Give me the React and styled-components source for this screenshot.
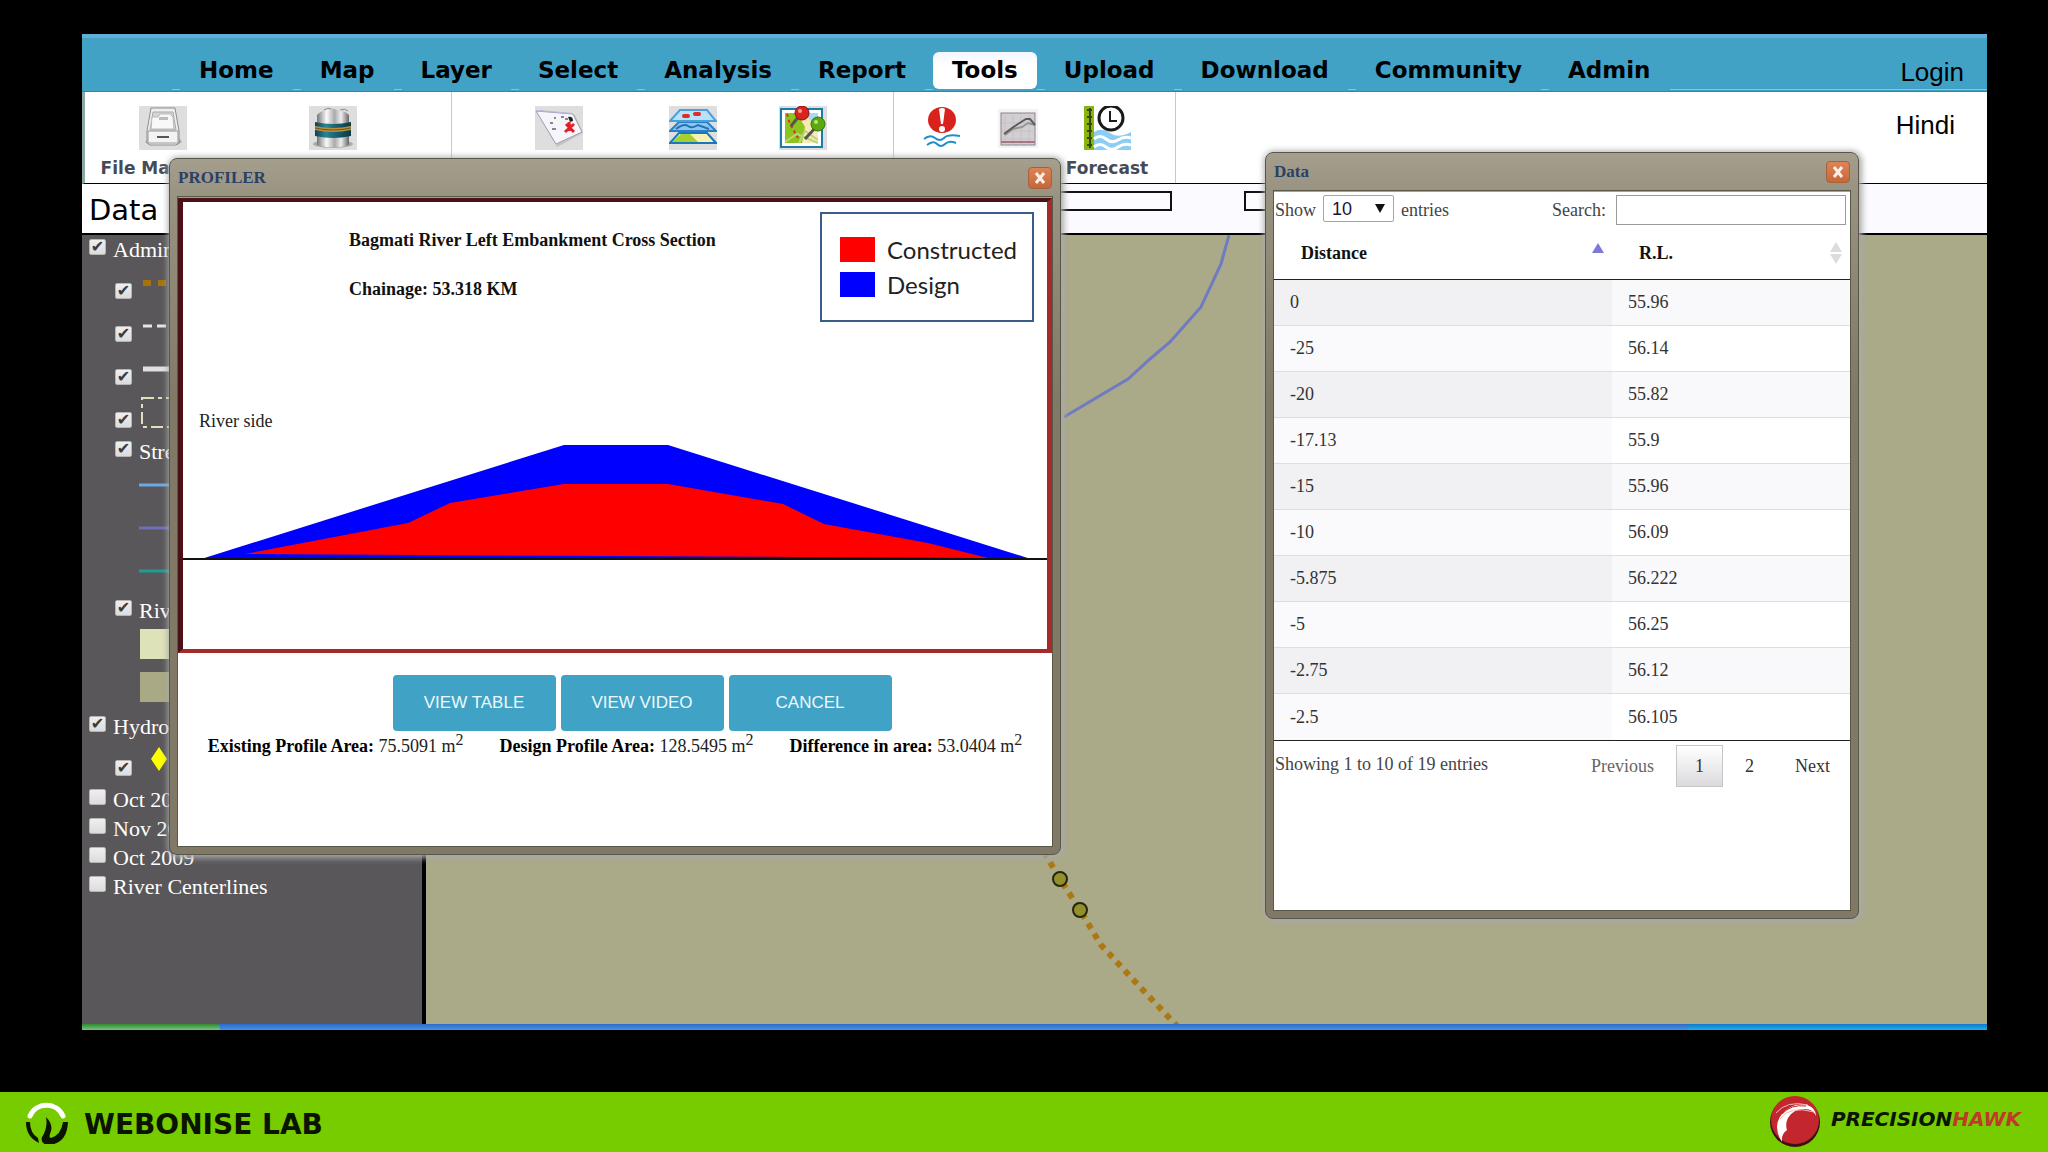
import React from 'react';
import styled, { createGlobalStyle, css } from 'styled-components';

const serif = '"Liberation Serif", "Times New Roman", serif';
const sans = '"Liberation Sans", Arial, sans-serif';
const wide = '"DejaVu Sans", Verdana, sans-serif';

const GlobalStyle = createGlobalStyle`
  *, *::before, *::after {
    box-sizing: border-box;
  }
  body {
    margin: 0;
    background: #000;
    font-family: ${serif};
  }
  svg {
    display: block;
  }
`;

const Page = styled.div`
  min-height: 100vh;
  display: flex;
  flex-direction: column;
`;

const Screen = styled.main`
  position: relative;
  flex: 1;
  margin: 34px 61px 62px 82px;
  display: flex;
  flex-direction: column;
  overflow: hidden;
  background: #fff;
`;

/* menu bar */

const NavBar = styled.nav`
  height: 58px;
  padding-left: 90px;
  display: flex;
  background: #42a2c6;
  border-top: 4px solid #63aed6;
  border-bottom: 1px solid #75715f;
`;

const Tabs = styled.ul`
  flex: 1;
  height: 52px;
  margin: 0;
  padding: 14px 0 0 8px;
  list-style: none;
  display: flex;
  gap: 8px;
  border-bottom: 1px solid #83c3e6;
`;

const Tab = styled.li`
  height: 38px;
  background: #42a2c6;
`;

const TabLink = styled.a`
  display: block;
  height: 37px;
  padding: 0 19px;
  font: bold 23px/36px ${wide};
  color: #000;
  text-decoration: none;
  border-radius: 6px;
  ${props => props.$active && css`
    background: linear-gradient(#f3f6ff, #fff 40%);
  `}
`;

const LoginItem = styled.li`
  margin-left: auto;
  padding-right: 23px;
`;

const PlainLink = styled.a`
  font: 26px/40px ${sans};
  color: #000;
  text-decoration: none;
`;

/* ribbon */

const Ribbon = styled.div`
  height: 92px;
  display: flex;
  border-left: 3px solid #8aa9a6;
  border-bottom: 1px solid #000;
`;

const Group = styled.div`
  width: ${props => props.$width}px;
  padding-left: ${props => props.$indent}px;
  display: flex;
  gap: ${props => props.$gap || 0}px;
  border-right: 1px solid #c8c8cc;
`;

const Tool = styled.button`
  width: ${props => props.$width}px;
  padding: 14px 0 0;
  display: flex;
  flex-direction: column;
  align-items: center;
  gap: 8px;
  border: 0;
  background: none;
  font: bold 17px/20px ${wide};
  color: #464a54;
  white-space: nowrap;
`;

const Language = styled.div`
  margin-left: auto;
  padding: 13px 32px 0 0;
`;

/* header row above the panels */

const SubBar = styled.div`
  height: 51px;
  display: flex;
  background: #fbfafe;
  border-bottom: 2px solid #000;
`;

const PanelTitle = styled.h1`
  width: 344px;
  margin: 0;
  padding-left: 7px;
  background: #fff;
  font: 29px/53px ${wide};
  color: #000;
`;

const SubBarFields = styled.div`
  flex: 1;
  padding: 7px 0 0 586px;
  display: flex;
  gap: 72px;
`;

const Field = styled.input`
  width: 160px;
  height: 20px;
  border: 2px solid #111;
  background: #fcfbff;
`;

/* layer tree */

const Workspace = styled.div`
  flex: 1;
  display: flex;
`;

const Sidebar = styled.aside`
  width: 344px;
  background: #595759;
  border-right: 4px solid #000;
`;

const Layer = styled.label`
  height: ${props => (props.$tall ? 43 : 30)}px;
  padding-left: ${props => (props.$nested ? 33 : 7)}px;
  display: flex;
  align-items: flex-start;
  gap: 7px;
  font: 22px/29px ${serif};
  color: #fff;
  white-space: nowrap;
`;

const ImageryLayer = styled(Layer)`
  height: 29px;
`;

const Tick = styled.input`
  appearance: none;
  width: 17px;
  height: 16px;
  margin: ${props => (props.$tall ? 18 : 4)}px 0 0;
  display: grid;
  place-items: center;
  border: 1px solid #b5b5b5;
  border-radius: 2px;
  background: linear-gradient(#efefef, #dcdcdc);

  &:checked::before {
    content: '✔';
    font: 16px/14px ${wide};
    color: #3c3c3c;
  }
`;

const LegendRow = styled.div`
  height: 43px;
  padding-left: 57px;
`;

/* map */

const Map = styled.div`
  flex: 1;
  background: #aaa988;
`;

const TaskBar = styled.div`
  height: 6px;
  display: flex;
  background: linear-gradient(#2a6cc8, #4a90ea);
`;

const StartEdge = styled.div`
  width: 138px;
  border-radius: 0 4px 0 0;
  background: linear-gradient(#2f8a35, #7cc47c);
`;

const TrayEdge = styled.div`
  width: 299px;
  margin-left: auto;
  background: linear-gradient(#1479c8, #19b0f4);
`;

/* floating windows */

const Window = styled.section`
  position: absolute;
  left: ${props => props.$left}px;
  top: ${props => props.$top}px;
  width: ${props => props.$width}px;
  height: ${props => props.$height}px;
  padding: 0 8px 8px;
  display: flex;
  flex-direction: column;
  border: 1px solid #58564a;
  border-radius: 8px;
  background: linear-gradient(#a59e8c, #989280 40px, #7f7965 240px);
  box-shadow: 1px 1px 6px 2px #a9a9a9;
`;

const TitleBar = styled.header`
  height: 38px;
  display: flex;
  align-items: center;
  justify-content: space-between;
`;

const Title = styled.h2`
  margin: 0;
  font: bold 17px/20px ${serif};
  color: #2b4066;
`;

const Close = styled.button`
  width: 24px;
  height: 22px;
  padding: 0;
  display: grid;
  place-items: center;
  border: 1px solid #a9603c;
  border-radius: 4px;
  background: linear-gradient(#dc8455, #c4683a);
`;

const WindowBody = styled.div`
  flex: 1;
  background: #fff;
  border-top: 1px solid #97a3b4;
  box-shadow: 0 0 0 1px #5b5747;
`;

const Frame = styled.div`
  border: solid;
  border-width: 4px 5px;
  border-color: #4a1216 #a52a2a #a52a2a #4a1216;
`;

const FrameHead = styled.div`
  height: 207px;
  padding: 10px 13px 0 166px;
  display: flex;
  justify-content: space-between;
`;

const Captions = styled.div`
  padding-top: 16px;
  display: flex;
  flex-direction: column;
  gap: 25px;
  font: bold 18px/24px ${serif};
  color: #111;
`;

const Legend = styled.div`
  width: 214px;
  height: 110px;
  padding: 23px 0 0 18px;
  display: flex;
  flex-direction: column;
  gap: 10px;
  border: 2px solid #385d8a;
`;

const LegendItem = styled.div`
  display: flex;
  align-items: center;
  gap: 12px;
  font: 24px/25px Lato, Carlito, sans-serif;
  color: #222;

  &::before {
    content: '';
    width: 35px;
    height: 25px;
    background: ${props => props.$color};
  }
`;

const SideNote = styled.div`
  height: 31px;
  padding-left: 16px;
  font: 18px/24px ${serif};
  color: #222;
`;

const Actions = styled.div`
  padding: 22px 0 0 54px;
  display: flex;
  justify-content: center;
  gap: 5px;
`;

const Action = styled.button`
  width: 163px;
  height: 56px;
  border: 0;
  border-radius: 4px;
  background: #40a3c6;
  font: 17px/20px ${sans};
  color: #eef8fc;
`;

const Stats = styled.div`
  display: flex;
  justify-content: center;
  gap: 36px;
  font: 18px/30px ${serif};
  color: #222;
  white-space: nowrap;

  b {
    color: #000;
  }
  sup {
    font-size: 16px;
    line-height: 0;
  }
`;

/* data table */

const Controls = styled.div`
  height: 38px;
  padding: 3px 4px 0 1px;
  display: flex;
  justify-content: space-between;
  font: 18px/30px ${serif};
  color: #444;
`;

const ControlLabel = styled.label`
  display: flex;
  gap: ${props => props.$gap}px;
`;

const SelectBox = styled.span`
  position: relative;
  height: 27px;

  svg {
    position: absolute;
    right: 9px;
    top: 9px;
    pointer-events: none;
  }
`;

const Select = styled.select`
  appearance: none;
  display: block;
  width: 71px;
  height: 27px;
  padding: 0 8px;
  border: 1px solid #a6a6a6;
  border-radius: 2px;
  background: #fff;
  font: 18px/24px ${sans};
  color: #21123c;
`;

const Search = styled.input`
  width: 230px;
  height: 30px;
  border: 1px solid #9a9a9a;
  background: #fff;
`;

const Table = styled.table`
  width: 100%;
  table-layout: fixed;
  border-collapse: separate;
  border-spacing: 0;
  border-bottom: 1px solid #222;
  font: 18px/24px ${serif};
  color: #333;
`;

const HeadCell = styled.th`
  width: ${props => props.$width};
  height: 50px;
  padding: 0 8px 4px 27px;
  border-bottom: 1px solid #222;
  color: #111;
  text-align: left;
`;

const HeadLabel = styled.span`
  display: flex;
  justify-content: space-between;
  align-items: center;
`;

const Cell = styled.td`
  height: 46px;
  padding: 0 0 1px 16px;
  border-bottom: 1px solid #dedee0;
`;

const Row = styled.tr`
  ${Cell}:first-child {
    background: #fafafc;
  }
  &:nth-child(odd) ${Cell} {
    background: #f9f8fa;
  }
  &:nth-child(odd) ${Cell}:first-child {
    background: #f1f0f3;
  }
  &:last-child ${Cell} {
    border-bottom: 0;
  }
`;

const TableFoot = styled.div`
  padding: 4px 1px 0;
  display: flex;
  justify-content: space-between;
  font: 18px/38px ${serif};
  color: #444;
`;

const Pager = styled.div`
  display: flex;
  gap: 3px;
`;

const PageButton = styled.button`
  height: 42px;
  padding: 0 18px;
  border: 1px solid ${props => (props.$current ? '#c6c6c8' : 'transparent')};
  background: ${props => (props.$current ? 'linear-gradient(#fff, #dbdadd)' : 'none')};
  font: 18px/24px ${serif};
  color: ${props => (props.disabled ? '#666' : '#333')};
`;

/* sponsor strip */

const Footer = styled.footer`
  height: 60px;
  padding: 0 27px 0 25px;
  display: flex;
  align-items: center;
  justify-content: space-between;
  background: #77cc00;
`;

const Brand = styled.div`
  display: flex;
  align-items: center;
  gap: ${props => props.$gap}px;
`;

const LabName = styled.span`
  padding-top: 5px;
  font: bold 28px/44px ${wide};
  color: #0a1400;
`;

const HawkName = styled.span`
  padding-bottom: 6px;
  font: italic bold 20px/44px ${wide};
  color: #0a1400;

  em {
    color: #c0392b;
  }
`;

const tiles = {
  file: (
    <>
      <rect width="48" height="44" fill="#dedede" />
      <path d="M9 33 6 36l5 3h27l5-3-3-4z" fill="#a9a9a9" />
      <path d="M12 2h24l4 23v12l-3 2H11l-3-2V25z" fill="#efefef" stroke="#8c8c8c" />
      <path d="M14 6h20l3 18H11z" fill="#d4d4d4" stroke="#aaa" />
      <path d="M13 11h6l2-3h10l3 3 1 12H12z" fill="#f8f8f8" stroke="#bbb" />
      <rect x="20" y="11" width="9" height="3" fill="#bbb" />
      <path d="M9 25h30v12H9z" fill="#f3f3f3" stroke="#999" />
      <path d="M18 30h12v2H18z" fill="#555" />
    </>
  ),
  database: (
    <>
      <defs>
        <linearGradient id="steel">
          <stop offset="0" stopColor="#777" />
          <stop offset=".3" stopColor="#fafafa" />
          <stop offset=".55" stopColor="#aaa" />
          <stop offset=".75" stopColor="#eee" />
          <stop offset="1" stopColor="#666" />
        </linearGradient>
        <linearGradient id="teal">
          <stop offset="0" stopColor="#0d4250" />
          <stop offset=".3" stopColor="#2b8596" />
          <stop offset=".6" stopColor="#175f70" />
          <stop offset="1" stopColor="#0b3a47" />
        </linearGradient>
      </defs>
      <rect width="48" height="44" fill="#dedede" />
      <ellipse cx="24" cy="38" rx="20" ry="4" fill="#aaa" />
      <path d="M8 9q5-5 11-5l4-2 5 2q7 0 12 5v30q-16 5-32 0z" fill="url(#steel)" />
      <path d="M15 4q4-3 7-1M31 4q5-2 8 1" fill="none" stroke="#888" />
      <path d="M6 16q18 4 36 0v14q-18 4-36 0z" fill="url(#teal)" />
      <path d="M6 20q18 4 36 0v4q-18 4-36 0z" fill="#b9903a" />
      <path d="M6 22q18 4 36 0" fill="none" stroke="#6e5520" />
    </>
  ),
  select: (
    <>
      <rect width="48" height="44" fill="#dedede" />
      <path d="M3 8 40 9l8 18-26 14z" fill="#aaa" opacity=".5" />
      <path d="M1 5 38 8l9 18-26 12z" fill="#f5f5fb" stroke="#a0a0b0" />
      <path d="M1 5l3-1 34 3v1z" fill="#b9b6dc" />
      <path d="M15 17h3M19 12h2M26 11h3M17 23h4M30 13h3" stroke="#888" strokeWidth="2" />
      <path d="M33 11q5-1 5 4l-3 1z" fill="#222" />
      <path d="m31 18 8 8m0-8-9 8m4-10 1 9" stroke="#e3202a" strokeWidth="3" />
    </>
  ),
  layers: (
    <>
      <rect width="48" height="44" fill="#dedede" />
      <path d="M10 27h28l9 10H1z" fill="#f8f2b0" stroke="#1877c0" strokeWidth="2" />
      <path d="M12 28h9l8 8H3z" fill="#a3d02c" />
      <path d="M10 16h28l9 9H1z" fill="#8cc5f2" stroke="#2a7fc4" strokeWidth="2" />
      <path d="M7 23q8-6 12-3t10-1l11 4" fill="none" stroke="#2372b4" strokeWidth="2" />
      <path d="M11 4h27l9 11H1z" fill="#b6e2fa" stroke="#4a9fdc" strokeWidth="2" />
      <rect x="13" y="8" width="8" height="4" rx="2" fill="#e02a22" />
      <rect x="24" y="6" width="8" height="4" rx="2" fill="#e02a22" />
    </>
  ),
  pins: (
    <>
      <rect width="48" height="44" fill="#dedede" />
      <rect x="2" y="3" width="41" height="38" fill="#fff" stroke="#1c7ba8" strokeWidth="2" />
      <path d="M6 7h33v30H6z" fill="#f9e9b6" />
      <path d="M6 7h12l8 14-3 16H6z" fill="#8dc51e" />
      <path d="M26 7h13v11q-9-2-13-11z" fill="#a4dcf6" />
      <path d="M6 36 18 28l21 9M20 37l6-12 13 9" fill="none" stroke="#b9d67e" strokeWidth="2" />
      <path d="M8 8l3 10 8 14" fill="none" stroke="#d3371c" strokeWidth="2" strokeDasharray="3 3" />
      <path d="M21 9 12 20M37 21 26 33" stroke="#555" strokeWidth="3" />
      <circle cx="23" cy="7" r="7" fill="#d8261c" stroke="#8b0f0a" />
      <circle cx="39" cy="18" r="7" fill="#5ca80f" stroke="#33700a" />
      <circle cx="21" cy="5" r="2" fill="#f6a49c" />
      <circle cx="37" cy="16" r="2" fill="#b7e47c" />
    </>
  ),
  alert: (
    <>
      <ellipse cx="24" cy="14" rx="14" ry="13" fill="#d9221c" />
      <path d="M21 3q3-2 6 0l-2 15h-2z" fill="#fff" />
      <circle cx="24" cy="23" r="3" fill="#fff" />
      <path d="M6 33q6-5 11-1t9 0 16-2M9 39q6-5 10-1t8 0 11-1" fill="none" stroke="#1f8fc8" strokeWidth="2" />
    </>
  ),
  chart: (
    <>
      <rect x="4" y="3" width="40" height="39" fill="#f3f2f4" />
      <rect x="7" y="7" width="34" height="32" fill="#d2ced2" stroke="#8a858a" />
      <path d="M11 9v30M19 9v30M27 9v30M35 9v30M8 17h33M8 25h33M8 33h33" stroke="#c4c0c4" />
      <path d="M7 36h34" stroke="#a87680" strokeWidth="2" />
      <path d="M11 29l8-6 9-2 6-4 7 2" fill="none" stroke="#8f9a90" strokeWidth="2" />
      <path d="M10 28l8-6 6-4 8-5h4l5 6" fill="none" stroke="#5c5a60" strokeWidth="2" />
    </>
  ),
  forecast: (
    <>
      <rect x="1" width="10" height="44" fill="#8bb410" />
      <path d="M7 2v40M4 4h5M4 11h5M4 18h5M4 25h5M4 32h5M4 39h5" stroke="#34480a" strokeWidth="2" />
      <path d="M11 26q8-5 16 1t21-1v18H11z" fill="#8ccdf4" />
      <path
        d="M11 33q6-5 12 0t12 1q6-4 13-2M11 41q6-5 12 0t12 0q6-4 13-2"
        fill="none"
        stroke="#fff"
        strokeWidth="3"
      />
      <circle cx="28" cy="12" r="12" fill="#fff" stroke="#1a1a1a" strokeWidth="3" />
      <path d="M27 5v10h7" fill="none" stroke="#1a1a1a" strokeWidth="2" />
    </>
  ),
};

const ToolItem = ({ icon, width, label, name }) => (
  <Tool type="button" $width={width} aria-label={label || name}>
    <svg width="48" height="44" viewBox="0 0 48 44" aria-hidden="true">
      {tiles[icon]}
    </svg>
    {label}
  </Tool>
);

const Symbol = ({ children }) => (
  <svg width="62" height="40" viewBox="0 0 62 40" aria-hidden="true">
    {children}
  </svg>
);

const CloseButton = () => (
  <Close type="button" aria-label="Close">
    <svg width="12" height="12" viewBox="0 0 12 12">
      <path d="M2 1l8 10M10 1 2 11" stroke="#fbeee6" strokeWidth="3" />
    </svg>
  </Close>
);

const menu = ['Home', 'Map', 'Layer', 'Select', 'Analysis', 'Report', 'Tools', 'Upload', 'Download', 'Community', 'Admin'];

const adminSymbols = [
  <path key="a" d="M4 18h58" stroke="#a8720a" strokeWidth="6" strokeDasharray="8 7" />,
  <path key="b" d="M4 18h58" stroke="#e6e6e6" strokeWidth="3" strokeDasharray="9 5" />,
  <path key="c" d="M4 18h58" stroke="#e0e0e0" strokeWidth="5" />,
  <rect key="d" x="3" y="4" width="56" height="29" fill="none" stroke="#e2e0bb" strokeWidth="2" strokeDasharray="12 4 4 4" />,
];

const streamColors = ['#6fa8e6', '#6e70b8', '#1f9c94'];
const imagery = ['Oct 2007', 'Nov 2008', 'Oct 2009', 'River Centerlines'];

const readings = [
  ['0', '55.96'],
  ['-25', '56.14'],
  ['-20', '55.82'],
  ['-17.13', '55.9'],
  ['-15', '55.96'],
  ['-10', '56.09'],
  ['-5.875', '56.222'],
  ['-5', '56.25'],
  ['-2.75', '56.12'],
  ['-2.5', '56.105'],
];

const LayerTree = () => (
  <Sidebar>
    <Layer>
      <Tick type="checkbox" defaultChecked />
      Admin
    </Layer>
    {adminSymbols.map((symbol, i) => (
      <Layer key={i} $nested $tall>
        <Tick type="checkbox" defaultChecked $tall aria-label={`Boundary ${i + 1}`} />
        <Symbol>{symbol}</Symbol>
      </Layer>
    ))}
    <Layer $nested>
      <Tick type="checkbox" defaultChecked />
      Stream
    </Layer>
    {streamColors.map(color => (
      <LegendRow key={color}>
        <Symbol>
          <path d="M0 18h62" stroke={color} strokeWidth="3" />
        </Symbol>
      </LegendRow>
    ))}
    <Layer $nested>
      <Tick type="checkbox" defaultChecked />
      River
    </Layer>
    {['#dde2b8', '#a9a985'].map(color => (
      <LegendRow key={color}>
        <Symbol>
          <rect x="1" y="3" width="60" height="30" fill={color} />
        </Symbol>
      </LegendRow>
    ))}
    <Layer>
      <Tick type="checkbox" defaultChecked />
      Hydro
    </Layer>
    <Layer $nested $tall>
      <Tick type="checkbox" defaultChecked $tall aria-label="Gauge stations" />
      <Symbol>
        <path d="M20 5l8 12-8 12-8-12z" fill="#ff0" />
      </Symbol>
    </Layer>
    {imagery.map(name => (
      <ImageryLayer key={name}>
        <Tick type="checkbox" />
        {name}
      </ImageryLayer>
    ))}
  </Sidebar>
);

const MapCanvas = () => (
  <Map>
    <svg width="1120" height="789" viewBox="0 0 1120 789" aria-hidden="true">
      <path d="M803 0l-8 29-20 43-31 35-20 17-22 20-64 38" fill="none" stroke="#6f7bc2" strokeWidth="3" />
      <path
        d="M618 617l16 27 20 31 21 35 40 43 36 38"
        fill="none"
        stroke="#ad7812"
        strokeWidth="6"
        strokeDasharray="6 6"
      />
      {[[634, 644], [654, 675]].map(([x, y]) => (
        <circle key={x} cx={x} cy={y} r="7" fill="#93902c" stroke="#26260c" strokeWidth="2" />
      ))}
    </svg>
  </Map>
);

const Profiler = () => (
  <Window $left={87} $top={124} $width={892} $height={697}>
    <TitleBar>
      <Title>PROFILER</Title>
      <CloseButton />
    </TitleBar>
    <WindowBody>
      <Frame>
        <FrameHead>
          <Captions>
            <span>Bagmati River Left Embankment Cross Section</span>
            <span>Chainage: 53.318 KM</span>
          </Captions>
          <Legend>
            <LegendItem $color="#f00">Constructed</LegendItem>
            <LegendItem $color="#00f">Design</LegendItem>
          </Legend>
        </FrameHead>
        <SideNote>River side</SideNote>
        <svg width="100%" height="209" viewBox="0 0 864 209" role="img" aria-label="Embankment cross section">
          <path d="M15 120 381 5h104l366 115z" fill="#00f" />
          <path d="M62 114 225 83l42-20 114-19h104l115 20 41 20 104 19 60 15z" fill="#f00" />
          <path d="M0 119h864" stroke="#111" strokeWidth="2" />
        </svg>
      </Frame>
      <Actions>
        <Action type="button">VIEW TABLE</Action>
        <Action type="button">VIEW VIDEO</Action>
        <Action type="button">CANCEL</Action>
      </Actions>
      <Stats>
        <span><b>Existing Profile Area:</b> 75.5091 m<sup>2</sup></span>
        <span><b>Design Profile Area:</b> 128.5495 m<sup>2</sup></span>
        <span><b>Difference in area:</b> 53.0404 m<sup>2</sup></span>
      </Stats>
    </WindowBody>
  </Window>
);

const DataWindow = () => (
  <Window $left={1183} $top={118} $width={594} $height={767}>
    <TitleBar>
      <Title>Data</Title>
      <CloseButton />
    </TitleBar>
    <WindowBody>
      <Controls>
        <ControlLabel $gap={7}>
          Show
          <SelectBox>
            <Select defaultValue="10">
              <option>10</option>
              <option>25</option>
            </Select>
            <svg width="10" height="9" viewBox="0 0 10 9">
              <path d="M0 0h10L5 9z" fill="#111" />
            </svg>
          </SelectBox>
          entries
        </ControlLabel>
        <ControlLabel $gap={10}>
          Search:
          <Search type="search" />
        </ControlLabel>
      </Controls>
      <Table>
        <thead>
          <tr>
            <HeadCell $width="338px">
              <HeadLabel>
                Distance
                <svg width="12" height="22" viewBox="0 0 12 22">
                  <path d="M0 11h12L6 1z" fill="#7c79d8" />
                </svg>
              </HeadLabel>
            </HeadCell>
            <HeadCell>
              <HeadLabel>
                R.L.
                <svg width="12" height="22" viewBox="0 0 12 22">
                  <path d="M0 10h12L6 0zM0 12h12L6 22z" fill="#dcdce0" />
                </svg>
              </HeadLabel>
            </HeadCell>
          </tr>
        </thead>
        <tbody>
          {readings.map(([distance, level]) => (
            <Row key={distance}>
              <Cell>{distance}</Cell>
              <Cell>{level}</Cell>
            </Row>
          ))}
        </tbody>
      </Table>
      <TableFoot>
        Showing 1 to 10 of 19 entries
        <Pager>
          <PageButton type="button" disabled>Previous</PageButton>
          <PageButton type="button" $current>1</PageButton>
          <PageButton type="button">2</PageButton>
          <PageButton type="button">Next</PageButton>
        </Pager>
      </TableFoot>
    </WindowBody>
  </Window>
);

const App = () => (
  <Page>
    <GlobalStyle />
    <Screen>
      <NavBar>
        <Tabs>
          {menu.map(item => (
            <Tab key={item}>
              <TabLink href="#" $active={item === 'Tools'}>{item}</TabLink>
            </Tab>
          ))}
          <LoginItem>
            <PlainLink href="#">Login</PlainLink>
          </LoginItem>
        </Tabs>
      </NavBar>
      <Ribbon>
        <Group $width={367} $indent={15} $gap={44}>
          <ToolItem icon="file" width={126} label="File Manager" />
          <ToolItem icon="database" width={126} name="Database" />
        </Group>
        <Group $width={442} $indent={40}>
          <ToolItem icon="select" width={134} name="Select features" />
          <ToolItem icon="layers" width={134} name="Layers" />
          <ToolItem icon="pins" width={86} name="Locations" />
        </Group>
        <Group $width={282} $indent={10}>
          <ToolItem icon="alert" width={76} name="Flood alert" />
          <ToolItem icon="chart" width={76} name="Profiler" />
          <ToolItem icon="forecast" width={102} label="Forecast" />
        </Group>
        <Language>
          <PlainLink href="#">Hindi</PlainLink>
        </Language>
      </Ribbon>
      <SubBar>
        <PanelTitle>Data</PanelTitle>
        <SubBarFields>
          <Field type="text" aria-label="From" />
          <Field type="text" aria-label="To" />
        </SubBarFields>
      </SubBar>
      <Workspace>
        <LayerTree />
        <MapCanvas />
      </Workspace>
      <TaskBar>
        <StartEdge />
        <TrayEdge />
      </TaskBar>
      <Profiler />
      <DataWindow />
    </Screen>
    <Footer>
      <Brand $gap={15}>
        <svg width="44" height="44" viewBox="0 0 44 44" aria-hidden="true">
          <path d="M5 16a18 18 0 0 1 33 0" fill="none" stroke="#fff" strokeWidth="5" strokeLinecap="round" />
          <path d="M1 22h4q0 11 8 16l1 5Q1 37 1 22z" fill="#0a1400" />
          <path d="M21 17q7 7 5 14-3 7 0 7 10-3 12-16h5q-1 22-20 23-8-1-6-8 6-9 4-20z" fill="#0a1400" />
        </svg>
        <LabName>WEBONISE LAB</LabName>
      </Brand>
      <Brand $gap={9}>
        <svg width="54" height="52" viewBox="0 0 54 52" aria-hidden="true">
          <circle cx="27" cy="26" r="25" fill="#3a1216" />
          <circle cx="27" cy="24" r="24" fill="#c4262e" />
          <path
            d="M14 46Q4 30 14 18 24 6 39 9q9 3 9 11-3-7-11-7-12 0-17 9-3 6-1 12-6 4-5 12z"
            fill="#fff"
          />
          <path d="M8 17q11-13 32-8M12 23Q22 9 46 16" fill="none" stroke="#f0b7b9" strokeWidth="1" />
          <path d="M14 18q9-10 24-8" fill="none" stroke="#c4262e" strokeWidth="1" />
        </svg>
        <HawkName>PRECISION<em>HAWK</em></HawkName>
      </Brand>
    </Footer>
  </Page>
);

export default App;
